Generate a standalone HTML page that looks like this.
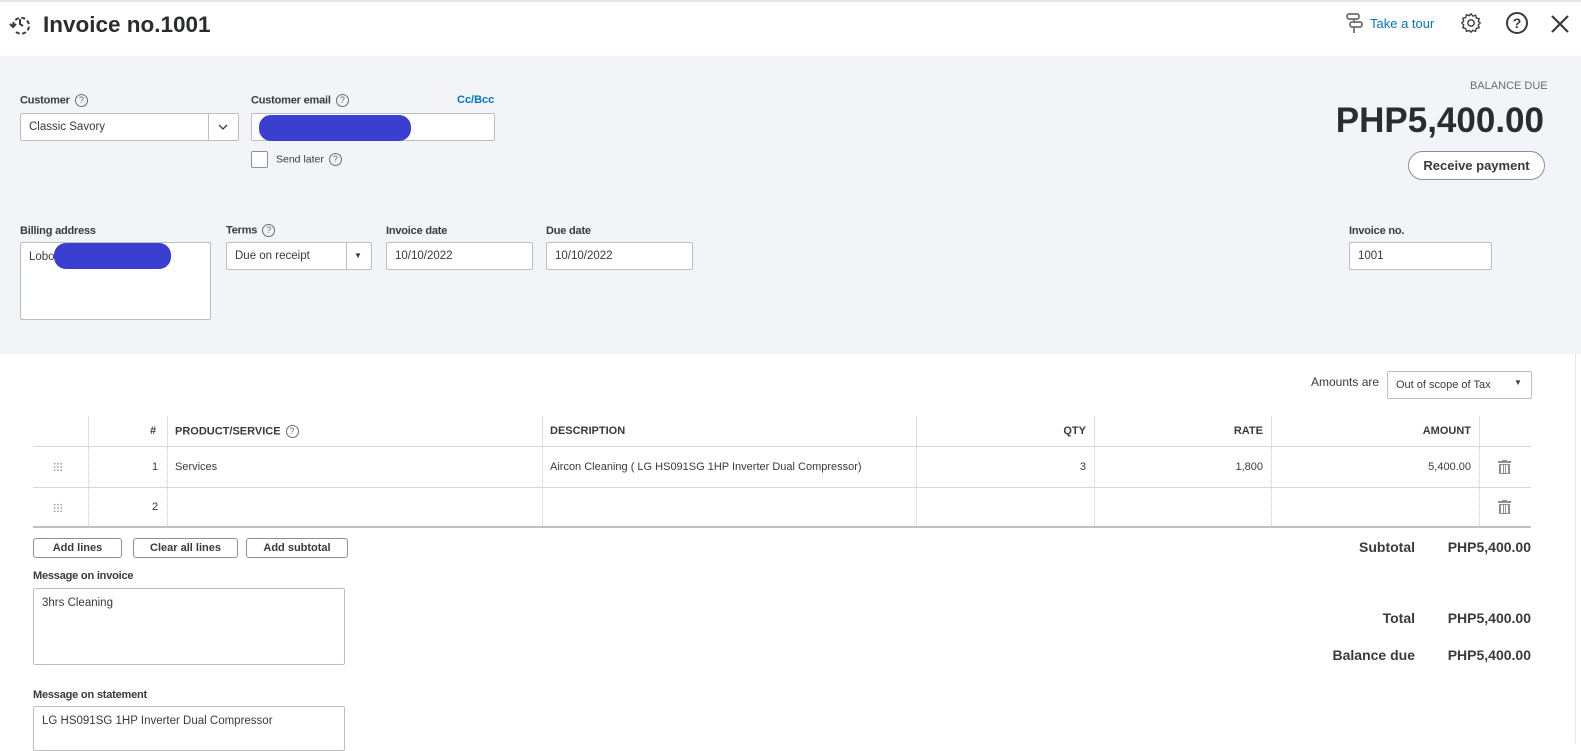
<!DOCTYPE html>
<html><head><meta charset="utf-8"><style>
*{box-sizing:border-box;margin:0;padding:0}
body{width:1581px;height:743px;overflow:hidden;background:#fff;font-family:"Liberation Sans",sans-serif;color:#393a3d;position:relative}
.a{position:absolute}
.lbl{font-size:11px;color:#393a3d;font-weight:bold;letter-spacing:-0.2px}
.inp{position:absolute;background:#fff;border:1px solid #babec5;border-radius:2px;font-size:11.5px;color:#393a3d;padding:0 8px;display:flex;align-items:center}
.q{display:inline-block;width:13px;height:13px;border:1px solid #6b6c72;border-radius:50%;font-size:9px;text-align:center;line-height:11px;color:#6b6c72;font-weight:normal;vertical-align:middle;margin-left:5px}
.blob{position:absolute;background:#3b3fd0;border-radius:12px}
.btn{position:absolute;height:20px;border:1px solid #8d9096;border-radius:3px;font-size:11px;font-weight:bold;display:flex;align-items:center;justify-content:center;background:#fff;color:#393a3d}
.vl{position:absolute;width:0;border-left:1px dotted #c9cbd0}
.vs{position:absolute;width:1px;background:#dcdee2}
.hl{position:absolute;height:1px;background:#d4d7dc}
.th{position:absolute;font-size:11px;font-weight:bold;top:425px}
.td{position:absolute;font-size:11px}
.r{text-align:right}
.dots{position:absolute;width:10px;height:10px;background-image:radial-gradient(circle,#9a9ba0 0.8px,transparent 1px);background-size:3.3px 3.3px}
</style></head><body>
<div class="a" style="left:0;top:0;width:1581px;height:2px;background:#e4e5e7"></div>
<svg class="a" style="left:8px;top:12px" width="24" height="24" viewBox="0 0 24 24" fill="none" stroke="#393a3d" stroke-width="2"><path d="M5 14a8 8 0 1 1 3 6" stroke-dasharray="4 2.5"/><path d="M12 7v5l3 2"/><path d="M2 12l3 3 3-3"/></svg>
<div class="a" style="left:43px;top:12px;font-size:22.5px;font-weight:bold;color:#2b2c2f">Invoice no.1001</div>
<svg class="a" style="left:1345px;top:12px" width="20" height="22" viewBox="0 0 20 22" fill="none" stroke="#6b6c72" stroke-width="1.7"><rect x="2" y="2" width="12" height="5" rx="2"/><rect x="5" y="10" width="12" height="5" rx="2"/><path d="M9 7v3M9 15v6"/></svg>
<div class="a" style="left:1370px;top:16px;font-size:13px;color:#0077c5">Take a tour</div>
<svg class="a" style="left:1460px;top:12px" width="22" height="22" viewBox="0 0 24 24" fill="none" stroke="#393a3d" stroke-width="1.5"><circle cx="12" cy="12" r="3.5"/><path d="M12 2l2 2.5 3-1 .8 3.1 3.1.8-1 3L22 12l-2.1 2.1 1 3-3.1.8-.8 3.1-3-1L12 22l-2-1.9-3 1-.8-3.1-3.1-.8 1-3L2 12l2.1-2.1-1-3 3.1-.8.8-3.1 3 1z"/></svg>
<div class="a" style="left:1506px;top:12px;width:22px;height:22px;border:2px solid #393a3d;border-radius:50%;text-align:center;font-size:14px;font-weight:bold;line-height:18px">?</div>
<svg class="a" style="left:1550px;top:14px" width="20" height="20" viewBox="0 0 20 20" stroke="#393a3d" stroke-width="2.2"><path d="M2 2l16 16M18 2L2 18"/></svg>

<div class="a" style="left:0;top:56px;width:1581px;height:298px;background:#f3f4f7"></div>
<div class="a lbl" style="left:20px;top:94px">Customer<span class="q">?</span></div>
<div class="inp" style="left:20px;top:113px;width:219px;height:28px">Classic Savory</div>
<div class="a" style="left:208px;top:114px;width:1px;height:26px;background:#babec5"></div>
<svg class="a" style="left:217px;top:122px" width="12" height="10" viewBox="0 0 12 10" fill="none" stroke="#393a3d" stroke-width="1.3"><path d="M2 3l4 4 4-4"/></svg>
<div class="a lbl" style="left:251px;top:94px">Customer email<span class="q">?</span></div>
<div class="a" style="left:457px;top:94px;font-size:11px;font-weight:bold;color:#0077c5">Cc/Bcc</div>
<div class="inp" style="left:251px;top:113px;width:244px;height:28px"></div>
<div class="blob" style="left:259px;top:115px;width:152px;height:26px"></div>
<div class="a" style="left:251px;top:151px;width:17px;height:17px;border:1px solid #8d9096;border-radius:2px;background:#fff"></div>
<div class="a" style="left:276px;top:153px;font-size:10.5px">Send later<span class="q">?</span></div>

<div class="a" style="left:1470px;top:80px;font-size:11px;color:#6b6c72">BALANCE DUE</div>
<div class="a" style="right:37px;top:101px;font-size:35px;font-weight:bold;color:#2b2c2f">PHP5,400.00</div>
<div class="a" style="left:1408px;top:151px;width:137px;height:29px;border:1.5px solid #8d9096;border-radius:15px;font-size:13px;font-weight:bold;display:flex;align-items:center;justify-content:center;background:#fff">Receive payment</div>

<div class="a lbl" style="left:20px;top:225px">Billing address</div>
<div class="inp" style="left:20px;top:242px;width:191px;height:78px;align-items:flex-start;padding-top:8px">Lobo</div>
<div class="blob" style="left:54px;top:243px;width:117px;height:26px"></div>
<div class="a lbl" style="left:226px;top:224px">Terms<span class="q">?</span></div>
<div class="inp" style="left:226px;top:242px;width:146px;height:28px">Due on receipt</div>
<div class="a" style="left:346px;top:243px;width:1px;height:26px;background:#babec5"></div>
<div class="a" style="left:354px;top:251px;font-size:8px">▼</div>
<div class="a lbl" style="left:386px;top:225px">Invoice date</div>
<div class="inp" style="left:386px;top:242px;width:147px;height:28px">10/10/2022</div>
<div class="a lbl" style="left:546px;top:225px">Due date</div>
<div class="inp" style="left:546px;top:242px;width:147px;height:28px">10/10/2022</div>
<div class="a lbl" style="left:1349px;top:225px">Invoice no.</div>
<div class="inp" style="left:1349px;top:242px;width:143px;height:28px">1001</div>

<div class="a" style="left:1575px;top:354px;width:1px;height:389px;background:#e4e5e7"></div>
<div class="a" style="left:1311px;top:375px;font-size:12px">Amounts are</div>
<div class="inp" style="left:1387px;top:371px;width:145px;height:28px;font-size:11px">Out of scope of Tax</div>
<div class="a" style="left:1514px;top:378px;font-size:8px">▼</div>

<div class="vs" style="left:88px;top:416px;height:30px"></div>
<div class="vs" style="left:167px;top:416px;height:30px"></div>
<div class="vs" style="left:542px;top:416px;height:30px"></div>
<div class="vs" style="left:916px;top:416px;height:30px"></div>
<div class="vs" style="left:1094px;top:416px;height:30px"></div>
<div class="vs" style="left:1271px;top:416px;height:30px"></div>
<div class="vs" style="left:1479px;top:416px;height:30px"></div>
<div class="vl" style="left:88px;top:447px;height:80px"></div>
<div class="vl" style="left:167px;top:447px;height:80px"></div>
<div class="vl" style="left:542px;top:447px;height:80px"></div>
<div class="vl" style="left:916px;top:447px;height:80px"></div>
<div class="vl" style="left:1094px;top:447px;height:80px"></div>
<div class="vl" style="left:1271px;top:447px;height:80px"></div>
<div class="vl" style="left:1479px;top:447px;height:80px"></div>
<div class="hl" style="left:33px;top:446px;width:1498px"></div>
<div class="hl" style="left:33px;top:487px;width:1498px"></div>
<div class="a" style="left:33px;top:526px;width:1498px;height:2px;background:#bfc1c5"></div>
<div class="th" style="left:150px">#</div>
<div class="th" style="left:175px">PRODUCT/SERVICE<span class="q">?</span></div>
<div class="th" style="left:550px">DESCRIPTION</div>
<div class="th r" style="left:1000px;width:86px">QTY</div>
<div class="th r" style="left:1180px;width:83px">RATE</div>
<div class="th r" style="left:1380px;width:91px">AMOUNT</div>
<div class="dots" style="left:53px;top:462px"></div>
<div class="dots" style="left:53px;top:503px"></div>
<div class="td" style="left:152px;top:461px">1</div>
<div class="td" style="left:152px;top:501px">2</div>
<div class="td" style="left:175px;top:461px">Services</div>
<div class="td" style="left:550px;top:461px">Aircon Cleaning ( LG HS091SG 1HP Inverter Dual Compressor)</div>
<div class="td r" style="left:1000px;top:461px;width:86px">3</div>
<div class="td r" style="left:1180px;top:461px;width:83px">1,800</div>
<div class="td r" style="left:1380px;top:461px;width:91px">5,400.00</div>
<svg class="a" style="left:1498px;top:460px" width="13" height="14" viewBox="0 0 13 14" fill="#8d9096"><rect x="0" y="1" width="13" height="2"/><rect x="4" y="0" width="5" height="2"/><path d="M1 4h11v10H1z M3 5v8h2V5z M6 5v8h1V5z M8 5v8h2V5z" fill-rule="evenodd"/></svg>
<svg class="a" style="left:1498px;top:500px" width="13" height="14" viewBox="0 0 13 14" fill="#8d9096"><rect x="0" y="1" width="13" height="2"/><rect x="4" y="0" width="5" height="2"/><path d="M1 4h11v10H1z M3 5v8h2V5z M6 5v8h1V5z M8 5v8h2V5z" fill-rule="evenodd"/></svg>

<div class="btn" style="left:33px;top:538px;width:89px">Add lines</div>
<div class="btn" style="left:133px;top:538px;width:105px">Clear all lines</div>
<div class="btn" style="left:246px;top:538px;width:102px">Add subtotal</div>

<div class="a" style="right:166px;top:539px;font-size:14px;font-weight:bold">Subtotal</div>
<div class="a" style="right:50px;top:539px;font-size:14px;font-weight:bold">PHP5,400.00</div>
<div class="a" style="right:166px;top:610px;font-size:14px;font-weight:bold">Total</div>
<div class="a" style="right:50px;top:610px;font-size:14px;font-weight:bold">PHP5,400.00</div>
<div class="a" style="right:166px;top:647px;font-size:14px;font-weight:bold">Balance due</div>
<div class="a" style="right:50px;top:647px;font-size:14px;font-weight:bold">PHP5,400.00</div>

<div class="a lbl" style="left:33px;top:570px">Message on invoice</div>
<div class="inp" style="left:33px;top:588px;width:312px;height:77px;align-items:flex-start;padding-top:8px">3hrs Cleaning</div>
<div class="a lbl" style="left:33px;top:689px">Message on statement</div>
<div class="inp" style="left:33px;top:706px;width:312px;height:45px;align-items:flex-start;padding-top:8px">LG HS091SG 1HP Inverter Dual Compressor</div>
</body></html>
